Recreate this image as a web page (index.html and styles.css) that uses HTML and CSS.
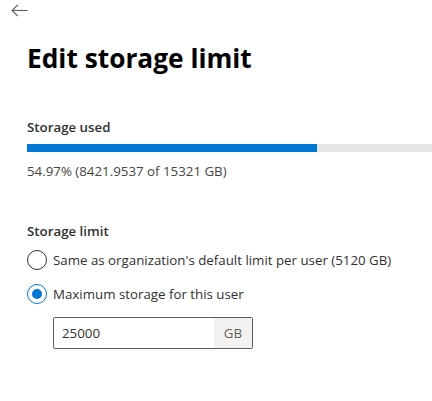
FILE: index.html
```html
<!DOCTYPE html>
<html lang="en">
<head>
<meta charset="utf-8">
<title>Edit storage limit</title>
<link rel="stylesheet" href="styles.css">
</head>
<body>
<div class="panel">
  <div class="topbar">
    <button class="back" aria-label="Back">
      <svg width="17" height="13" viewBox="0 0 17 13" fill="none" stroke="#605e5c" stroke-width="1.1">
        <path d="M16.5 6.5H1.2"/>
        <path d="M6.8 0.8L1.1 6.5L6.8 12.2"/>
      </svg>
    </button>
  </div>
  <div class="content">
    <h1 class="title">Edit storage limit</h1>
    <section class="usage">
      <div class="label">Storage used</div>
      <div class="track"><div class="fill" style="--pct:54.97"></div></div>
      <div class="detail">54.97% (8421.9537 of 15321 GB)</div>
    </section>
    <section class="limit">
      <div class="label">Storage limit</div>
      <div class="choices">
        <label class="choice">
          <span class="radio"></span>
          <span class="choice-text">Same as organization's default limit per user (5120 GB)</span>
        </label>
        <label class="choice">
          <span class="radio checked"></span>
          <span class="choice-text">Maximum storage for this user</span>
        </label>
      </div>
      <div class="field">
        <span class="field-value">25000</span>
        <span class="suffix">GB</span>
      </div>
    </section>
  </div>
</div>
</body>
</html>
```
FILE: styles.css
```css
* { box-sizing: border-box; }
html, body {
  margin: 0;
  padding: 0;
  background: #ffffff;
  overflow: hidden;
}
body {
  font-family: "Open Sans", "Noto Sans", "Liberation Sans", sans-serif;
  color: #323130;
  font-size: 13.3px;
  width: 432px;
  height: 401px;
}
.topbar {
  height: 20px;
}
.back {
  display: block;
  border: 0;
  background: none;
  padding: 0;
  margin: 4px 0 0 11px;
  width: 17px;
  height: 13px;
  line-height: 0;
}
.content {
  padding-left: 27px;
}
.title {
  margin: 18px 0 0 0;
  font-size: 26.3px;
  line-height: 32px;
  font-weight: 700;
  color: #000000;
}
.usage {
  margin-top: 43px;
}
.label {
  line-height: 20px;
  font-weight: 600;
  color: #323130;
}
.track {
  margin-top: 7px;
  height: 8px;
  background: #e6e6e6;
}
.fill {
  height: 100%;
  width: calc(var(--pct) * 5.28px);
  background: #0078d4;
}
.detail {
  margin-top: 9px;
  line-height: 20px;
  color: #484644;
}
.limit {
  margin-top: 40px;
}
.choices {
  margin-top: 9px;
  display: flex;
  flex-direction: column;
  gap: 14px;
}
.choice {
  display: flex;
  align-items: center;
  gap: 6px;
  line-height: 20px;
}
.radio {
  width: 20px;
  height: 20px;
  border: 1px solid #323130;
  border-radius: 50%;
  flex: none;
  position: relative;
}
.radio.checked {
  border-color: #0078d4;
}
.radio.checked::after {
  content: "";
  position: absolute;
  left: 4px;
  top: 4px;
  width: 10px;
  height: 10px;
  border-radius: 50%;
  background: #0078d4;
}
.field {
  margin: 13px 0 0 26px;
  width: 200px;
  height: 32px;
  border: 1px solid #605e5c;
  border-radius: 2px;
  display: flex;
  align-items: stretch;
}
.field-value {
  flex: 1;
  padding: 0 8px;
  display: flex;
  align-items: center;
  color: #323130;
}
.suffix {
  background: #f3f2f1;
  color: #605e5c;
  padding: 0 10px;
  display: flex;
  align-items: center;
}
```
